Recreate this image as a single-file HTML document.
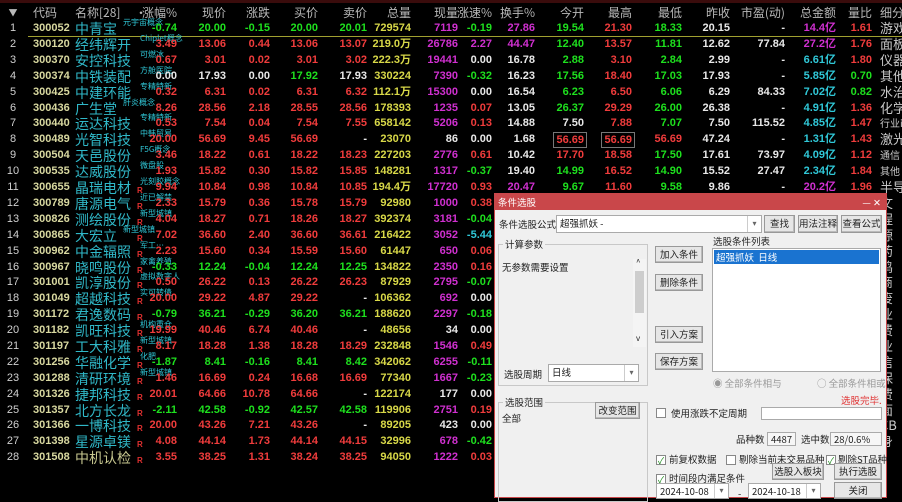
<!DOCTYPE html>
<html><head><meta charset="utf-8"><style>
*{margin:0;padding:0;box-sizing:border-box}
body{width:902px;height:498px;background:#000;overflow:hidden;position:relative;font-family:"Liberation Sans","Noto Sans CJK SC",sans-serif;font-size:11px;font-weight:bold}
.tabs{position:absolute;left:0;top:0;width:902px;height:3px;background:#3a0c0c}
.row{position:absolute;left:0;width:902px;height:16px;line-height:16px}
.row i{position:absolute;font-style:normal;white-space:nowrap}
.n0{left:4px;width:18px;text-align:center;color:#d0d0d0;font-weight:normal}
.cd{left:33px;color:#d8d8a0}
.nm{left:75px;color:#30b8c8;font-size:14px;font-weight:normal;font-family:"Noto Sans CJK SC",sans-serif;line-height:16px;top:1px}
.tg{left:122px;top:-2px;color:#30c8d8;font-size:8px;font-weight:normal;font-family:"Noto Sans CJK SC",sans-serif;line-height:10px}
.rr{left:137px;top:4px;color:#e03030;font-size:8px}
.a{right:725px}.b{right:676px}.c{right:632px}.d{right:584px}.e{right:535px}.f{right:491px}.g{right:444px}.h{right:410px}.i{right:367px}.j{right:318px}.k{right:270px}.l{right:220px}.m{right:172px}.n{right:117px}.o{right:66px}.p{right:30px}
.x{left:880px;color:#c8c8c8;font-weight:normal;font-family:"Noto Sans CJK SC",sans-serif;font-size:13px}
.R{color:#f03c3c}.G{color:#1ee01e}.W{color:#e8e8e8}.Y{color:#d8d848}.M{color:#d030d0}.C{color:#30c8d8}
.hd i{color:#b8b8b8;font-weight:normal;font-family:"Noto Sans CJK SC",sans-serif;font-size:12px}
.box{border:1px solid #777;padding:0 2px;margin-right:-3px;line-height:14px;top:1px}
.dlg{position:absolute;left:494px;top:193px;width:393px;height:305px;background:#f0f0f0;font-family:"Noto Sans CJK SC",sans-serif;font-size:9.5px;font-weight:normal;color:#222;border:1px solid #c9474a}
.dlg .t{position:absolute;left:0;top:0;width:100%;height:16px;background:#c9474a;color:#fff;padding-left:3px;line-height:16px}
.dlg div{position:absolute;white-space:nowrap}
.btn{background:#e6e6e6;border:1px solid #999;text-align:center;line-height:15px;box-shadow:inset -1px -1px #bbb}
.inp{background:#fff;border:1px solid #aaa;line-height:15px;padding-left:3px}
.grp{border:1px solid #c8c8c8}
.cb{width:10px;height:10px;border:1px solid #888;background:#fff;font-size:9px;line-height:9px;color:#1a8a1a;text-align:center}
.dd{border-left:1px solid #ccc;width:14px;height:100%;right:0;top:0;text-align:center;color:#666;font-size:8px}
</style></head><body>
<div class="tabs"></div>
<div class="row hd" style="top:5px"><i class="n0" style="font-size:9px">▼</i><i style="left:33px">代码</i><i style="left:75px">名称[28]</i><i style="left:135px">•</i><i class="a">涨幅%</i><i class="b">现价</i><i class="c">涨跌</i><i class="d">买价</i><i class="e">卖价</i><i class="f">总量</i><i class="g">现量</i><i class="h">涨速%</i><i class="i">换手%</i><i class="j">今开</i><i class="k">最高</i><i class="l">最低</i><i class="m">昨收</i><i class="n">市盈(动)</i><i class="o">总金额</i><i class="p">量比</i><i style="left:880px">细分</i></div>
<div style="position:absolute;left:28px;top:36px;width:874px;height:1px;background:#a0a030"></div>

<div class="row" style="top:20px"><i class="n0">1</i><i class="cd">300052</i><i class="nm">中青宝</i><i class="tg" style="left:123px">元宇宙概念</i><i class="a G">-0.74</i><i class="b G">20.00</i><i class="c G">-0.15</i><i class="d G">20.00</i><i class="e G">20.01</i><i class="f Y">729574</i><i class="g M">7119</i><i class="h G">-0.19</i><i class="i M">27.86</i><i class="j G">19.54</i><i class="k R">21.30</i><i class="l G">18.33</i><i class="m W">20.15</i><i class="n W">-</i><i class="o M">14.4亿</i><i class="p R">1.61</i><i class="x">游戏</i></div>
<div class="row" style="top:36px"><i class="n0">2</i><i class="cd">300120</i><i class="nm">经纬辉开</i><i class="tg" style="left:140px">Chiplet概念</i><i class="a R">3.49</i><i class="b R">13.06</i><i class="c R">0.44</i><i class="d R">13.06</i><i class="e R">13.07</i><i class="f Y">219.0万</i><i class="g M">26786</i><i class="h M">2.27</i><i class="i M">44.47</i><i class="j G">12.40</i><i class="k R">13.57</i><i class="l G">11.81</i><i class="m W">12.62</i><i class="n W">77.84</i><i class="o M">27.2亿</i><i class="p R">1.76</i><i class="x">面板</i></div>
<div class="row" style="top:52px"><i class="n0">3</i><i class="cd">300370</i><i class="nm">安控科技</i><i class="tg" style="left:140px">可燃冰</i><i class="a R">0.67</i><i class="b R">3.01</i><i class="c R">0.02</i><i class="d R">3.01</i><i class="e R">3.02</i><i class="f Y">222.3万</i><i class="g M">19441</i><i class="h W">0.00</i><i class="i W">16.78</i><i class="j G">2.88</i><i class="k R">3.10</i><i class="l G">2.84</i><i class="m W">2.99</i><i class="n W">-</i><i class="o C">6.61亿</i><i class="p R">1.80</i><i class="x">仪器</i></div>
<div class="row" style="top:68px"><i class="n0">4</i><i class="cd">300374</i><i class="nm">中铁装配</i><i class="tg" style="left:140px">方舱医院</i><i class="a W">0.00</i><i class="b W">17.93</i><i class="c W">0.00</i><i class="d G">17.92</i><i class="e W">17.93</i><i class="f Y">330224</i><i class="g M">7390</i><i class="h G">-0.32</i><i class="i W">16.23</i><i class="j G">17.56</i><i class="k R">18.40</i><i class="l G">17.03</i><i class="m W">17.93</i><i class="n W">-</i><i class="o C">5.85亿</i><i class="p G">0.70</i><i class="x">其他</i></div>
<div class="row" style="top:84px"><i class="n0">5</i><i class="cd">300425</i><i class="nm">中建环能</i><i class="tg" style="left:140px">专精特新</i><i class="a R">0.32</i><i class="b R">6.31</i><i class="c R">0.02</i><i class="d R">6.31</i><i class="e R">6.32</i><i class="f Y">112.1万</i><i class="g M">15300</i><i class="h W">0.00</i><i class="i W">16.54</i><i class="j G">6.23</i><i class="k R">6.50</i><i class="l G">6.06</i><i class="m W">6.29</i><i class="n W">84.33</i><i class="o C">7.02亿</i><i class="p G">0.82</i><i class="x">水治</i></div>
<div class="row" style="top:100px"><i class="n0">6</i><i class="cd">300436</i><i class="nm">广生堂</i><i class="tg" style="left:123px">肝炎概念</i><i class="a R">8.26</i><i class="b R">28.56</i><i class="c R">2.18</i><i class="d R">28.55</i><i class="e R">28.56</i><i class="f Y">178393</i><i class="g M">1235</i><i class="h R">0.07</i><i class="i W">13.05</i><i class="j G">26.37</i><i class="k R">29.29</i><i class="l G">26.00</i><i class="m W">26.38</i><i class="n W">-</i><i class="o C">4.91亿</i><i class="p R">1.36</i><i class="x">化学</i></div>
<div class="row" style="top:115px"><i class="n0">7</i><i class="cd">300440</i><i class="nm">运达科技</i><i class="tg" style="left:140px">专精特新</i><i class="a R">0.53</i><i class="b R">7.54</i><i class="c R">0.04</i><i class="d R">7.54</i><i class="e R">7.55</i><i class="f Y">658142</i><i class="g M">5206</i><i class="h R">0.13</i><i class="i W">14.88</i><i class="j W">7.50</i><i class="k R">7.88</i><i class="l G">7.07</i><i class="m W">7.50</i><i class="n W">115.52</i><i class="o C">4.85亿</i><i class="p R">1.47</i><i class="x" style="font-size:10px">行业i</i></div>
<div class="row" style="top:131px"><i class="n0">8</i><i class="cd">300489</i><i class="nm">光智科技</i><i class="tg" style="left:140px">中韩贸易</i><i class="a R">20.00</i><i class="b R">56.69</i><i class="c R">9.45</i><i class="d R">56.69</i><i class="e W">-</i><i class="f Y">23070</i><i class="g W">86</i><i class="h W">0.00</i><i class="i W">1.68</i><i class="j R box">56.69</i><i class="k R box">56.69</i><i class="l R">56.69</i><i class="m W">47.24</i><i class="n W">-</i><i class="o C">1.31亿</i><i class="p R">1.43</i><i class="x">激光</i></div>
<div class="row" style="top:147px"><i class="n0">9</i><i class="cd">300504</i><i class="nm">天邑股份</i><i class="tg" style="left:140px">F5G概念</i><i class="a R">3.46</i><i class="b R">18.22</i><i class="c R">0.61</i><i class="d R">18.22</i><i class="e R">18.23</i><i class="f Y">227203</i><i class="g M">2776</i><i class="h R">0.61</i><i class="i W">10.42</i><i class="j R">17.70</i><i class="k R">18.58</i><i class="l G">17.50</i><i class="m W">17.61</i><i class="n W">73.97</i><i class="o C">4.09亿</i><i class="p R">1.12</i><i class="x" style="font-size:10px">通信</i></div>
<div class="row" style="top:163px"><i class="n0">10</i><i class="cd">300535</i><i class="nm">达威股份</i><i class="tg" style="left:140px">微盘股</i><i class="a R">1.93</i><i class="b R">15.82</i><i class="c R">0.30</i><i class="d R">15.82</i><i class="e R">15.85</i><i class="f Y">148281</i><i class="g M">1317</i><i class="h G">-0.37</i><i class="i W">19.40</i><i class="j G">14.99</i><i class="k R">16.52</i><i class="l G">14.90</i><i class="m W">15.52</i><i class="n W">27.47</i><i class="o C">2.34亿</i><i class="p R">1.84</i><i class="x" style="font-size:10px">其他</i></div>
<div class="row" style="top:179px"><i class="n0">11</i><i class="cd">300655</i><i class="nm">晶瑞电材</i><i class="tg" style="left:140px">光刻胶概念</i><i class="rr">R</i><i class="a R">9.94</i><i class="b R">10.84</i><i class="c R">0.98</i><i class="d R">10.84</i><i class="e R">10.85</i><i class="f Y">194.4万</i><i class="g M">17720</i><i class="h R">0.93</i><i class="i M">20.47</i><i class="j G">9.67</i><i class="k R">11.60</i><i class="l G">9.58</i><i class="m W">9.86</i><i class="n W">-</i><i class="o M">20.2亿</i><i class="p R">1.96</i><i class="x">半导</i></div>
<div class="row" style="top:195px"><i class="n0">12</i><i class="cd">300789</i><i class="nm">唐源电气</i><i class="tg" style="left:140px">近已解禁</i><i class="rr">R</i><i class="a R">2.33</i><i class="b R">15.79</i><i class="c R">0.36</i><i class="d R">15.78</i><i class="e R">15.79</i><i class="f Y">92980</i><i class="g M">1000</i><i class="h R">0.38</i><i class="x">文</i></div>
<div class="row" style="top:211px"><i class="n0">13</i><i class="cd">300826</i><i class="nm">测绘股份</i><i class="tg" style="left:140px">新型城镇</i><i class="rr">R</i><i class="a R">4.04</i><i class="b R">18.27</i><i class="c R">0.71</i><i class="d R">18.26</i><i class="e R">18.27</i><i class="f Y">392374</i><i class="g M">3181</i><i class="h G">-0.04</i><i class="x">程</i></div>
<div class="row" style="top:227px"><i class="n0">14</i><i class="cd">300865</i><i class="nm">大宏立</i><i class="tg" style="left:123px">新型城镇</i><i class="rr">R</i><i class="a R">7.02</i><i class="b R">36.60</i><i class="c R">2.40</i><i class="d R">36.60</i><i class="e R">36.61</i><i class="f Y">216422</i><i class="g M">3052</i><i class="h C">-5.44</i><i class="x">源</i></div>
<div class="row" style="top:243px"><i class="n0">15</i><i class="cd">300962</i><i class="nm">中金辐照</i><i class="tg" style="left:140px">军工…</i><i class="rr">R</i><i class="a R">2.23</i><i class="b R">15.60</i><i class="c R">0.34</i><i class="d R">15.59</i><i class="e R">15.60</i><i class="f Y">61447</i><i class="g M">650</i><i class="h R">0.06</i><i class="x">药</i></div>
<div class="row" style="top:259px"><i class="n0">16</i><i class="cd">300967</i><i class="nm">晓鸣股份</i><i class="tg" style="left:140px">家禽养殖</i><i class="rr">R</i><i class="a G">-0.33</i><i class="b G">12.24</i><i class="c G">-0.04</i><i class="d G">12.24</i><i class="e G">12.25</i><i class="f Y">134822</i><i class="g M">2350</i><i class="h R">0.16</i><i class="x">鸡</i></div>
<div class="row" style="top:274px"><i class="n0">17</i><i class="cd">301001</i><i class="nm">凯淳股份</i><i class="tg" style="left:140px">虚拟数字人</i><i class="rr">R</i><i class="a R">0.50</i><i class="b R">26.22</i><i class="c R">0.13</i><i class="d R">26.22</i><i class="e R">26.23</i><i class="f Y">87929</i><i class="g M">2795</i><i class="h G">-0.07</i><i class="x">商</i></div>
<div class="row" style="top:290px"><i class="n0">18</i><i class="cd">301049</i><i class="nm">超越科技</i><i class="tg" style="left:140px">实可转债</i><i class="rr">R</i><i class="a R">20.00</i><i class="b R">29.22</i><i class="c R">4.87</i><i class="d R">29.22</i><i class="e W">-</i><i class="f Y">106362</i><i class="g M">692</i><i class="h W">0.00</i><i class="x">废</i></div>
<div class="row" style="top:306px"><i class="n0">19</i><i class="cd">301172</i><i class="nm">君逸数码</i><i class="rr">R</i><i class="a G">-0.79</i><i class="b G">36.21</i><i class="c G">-0.29</i><i class="d G">36.20</i><i class="e G">36.21</i><i class="f Y">188620</i><i class="g M">2297</i><i class="h G">-0.18</i><i class="x">业</i></div>
<div class="row" style="top:322px"><i class="n0">20</i><i class="cd">301182</i><i class="nm">凯旺科技</i><i class="tg" style="left:140px">机构重仓</i><i class="rr">R</i><i class="a R">19.99</i><i class="b R">40.46</i><i class="c R">6.74</i><i class="d R">40.46</i><i class="e W">-</i><i class="f Y">48656</i><i class="g W">34</i><i class="h W">0.00</i><i class="x">费</i></div>
<div class="row" style="top:338px"><i class="n0">21</i><i class="cd">301197</i><i class="nm">工大科雅</i><i class="tg" style="left:140px">新型城镇</i><i class="rr">R</i><i class="a R">8.17</i><i class="b R">18.28</i><i class="c R">1.38</i><i class="d R">18.28</i><i class="e R">18.29</i><i class="f Y">232848</i><i class="g M">1546</i><i class="h R">0.49</i><i class="x">业</i></div>
<div class="row" style="top:354px"><i class="n0">22</i><i class="cd">301256</i><i class="nm">华融化学</i><i class="tg" style="left:140px">化肥</i><i class="rr">R</i><i class="a G">-1.87</i><i class="b G">8.41</i><i class="c G">-0.16</i><i class="d G">8.41</i><i class="e G">8.42</i><i class="f Y">342062</i><i class="g M">6255</i><i class="h G">-0.11</i><i class="x">信</i></div>
<div class="row" style="top:370px"><i class="n0">23</i><i class="cd">301288</i><i class="nm">清研环境</i><i class="tg" style="left:140px">新型城镇</i><i class="rr">R</i><i class="a R">1.46</i><i class="b R">16.69</i><i class="c R">0.24</i><i class="d R">16.68</i><i class="e R">16.69</i><i class="f Y">77340</i><i class="g M">1667</i><i class="h G">-0.23</i><i class="x">保</i></div>
<div class="row" style="top:386px"><i class="n0">24</i><i class="cd">301326</i><i class="nm">捷邦科技</i><i class="rr">R</i><i class="a R">20.01</i><i class="b R">64.66</i><i class="c R">10.78</i><i class="d R">64.66</i><i class="e W">-</i><i class="f Y">122174</i><i class="g W">177</i><i class="h W">0.00</i><i class="x">费</i></div>
<div class="row" style="top:402px"><i class="n0">25</i><i class="cd">301357</i><i class="nm">北方长龙</i><i class="rr">R</i><i class="a G">-2.11</i><i class="b G">42.58</i><i class="c G">-0.92</i><i class="d G">42.57</i><i class="e G">42.58</i><i class="f Y">119906</i><i class="g M">2751</i><i class="h R">0.19</i><i class="x">面</i></div>
<div class="row" style="top:417px"><i class="n0">26</i><i class="cd">301366</i><i class="nm">一博科技</i><i class="rr">R</i><i class="a R">20.00</i><i class="b R">43.26</i><i class="c R">7.21</i><i class="d R">43.26</i><i class="e W">-</i><i class="f Y">89205</i><i class="g W">423</i><i class="h W">0.00</i><i class="x">CB</i></div>
<div class="row" style="top:433px"><i class="n0">27</i><i class="cd">301398</i><i class="nm">星源卓镁</i><i class="rr">R</i><i class="a R">4.08</i><i class="b R">44.14</i><i class="c R">1.73</i><i class="d R">44.14</i><i class="e R">44.15</i><i class="f Y">32996</i><i class="g M">678</i><i class="h G">-0.42</i><i class="x">身</i></div>
<div class="row" style="top:449px"><i class="n0">28</i><i class="cd">301508</i><i class="nm" style="color:#c8c890">中机认检</i><i class="rr">R</i><i class="a R">3.55</i><i class="b R">38.25</i><i class="c R">1.31</i><i class="d R">38.24</i><i class="e R">38.25</i><i class="f Y">94050</i><i class="g M">1222</i><i class="h R">0.03</i></div>

<div class="dlg">
<div class="t">条件选股<span style="position:absolute;right:5px;top:0">— ✕</span></div>
<div style="left:4px;top:23px">条件选股公式</div>
<div class="inp" style="left:61px;top:21px;width:206px;height:18px">超强抓妖 -<div class="dd">▾</div></div>
<div class="btn" style="left:269px;top:21px;width:31px;height:18px">查找</div>
<div class="btn" style="left:303px;top:21px;width:40px;height:18px">用法注释</div>
<div class="btn" style="left:346px;top:21px;width:41px;height:18px">查看公式</div>
<div class="grp" style="left:3px;top:50px;width:150px;height:142px"></div>
<div style="left:8px;top:43px;background:#f0f0f0;padding:0 2px">计算参数</div>
<div style="left:7px;top:66px">无参数需要设置</div>
<div style="left:138px;top:65px;width:13px;height:88px;background:#f4f4f4"><div style="left:2px;top:12px;width:9px;height:42px;background:#cdcdcd"></div><div style="left:3px;top:-2px;font-size:8px">^</div><div style="left:3px;top:74px;font-size:8px">v</div></div>
<div style="left:9px;top:173px">选股周期</div>
<div class="inp" style="left:53px;top:170px;width:91px;height:18px">日线<div class="dd">▾</div></div>
<div class="grp" style="left:3px;top:208px;width:150px;height:100px"></div>
<div style="left:8px;top:201px;background:#f0f0f0;padding:0 2px">选股范围</div>
<div style="left:7px;top:217px">全部</div>
<div class="btn" style="left:100px;top:208px;width:45px;height:17px">改变范围</div>
<div class="btn" style="left:160px;top:52px;width:48px;height:17px">加入条件</div>
<div class="btn" style="left:160px;top:80px;width:48px;height:17px">删除条件</div>
<div class="btn" style="left:160px;top:132px;width:48px;height:17px">引入方案</div>
<div class="btn" style="left:160px;top:159px;width:48px;height:17px">保存方案</div>
<div style="left:218px;top:40px">选股条件列表</div>
<div class="inp" style="left:217px;top:54px;width:169px;height:124px;padding:1px"><div style="left:1px;top:1px;width:165px;height:14px;background:#1a73d0;color:#fff;padding-left:2px;line-height:14px">超强抓妖&nbsp; 日线</div></div>
<div style="left:218px;top:182px;color:#999">◉ 全部条件相与</div>
<div style="left:322px;top:182px;color:#999">○ 全部条件相或</div>
<div style="left:346px;top:199px;color:#e03030">选股完毕.</div>
<div class="cb" style="left:161px;top:214px"></div><div style="left:176px;top:212px">使用涨跌不定周期</div>
<div class="inp" style="left:266px;top:213px;width:121px;height:13px"></div>
<div style="left:241px;top:238px">品种数</div>
<div class="inp" style="left:272px;top:238px;width:29px;height:14px;line-height:12px;background:#f6f6f6">4487</div>
<div style="left:306px;top:238px">选中数</div>
<div class="inp" style="left:335px;top:238px;width:52px;height:14px;line-height:12px;background:#f6f6f6">28/0.6%</div>
<div class="cb" style="left:161px;top:261px">✓</div><div style="left:174px;top:258px">前复权数据</div>
<div class="cb" style="left:231px;top:261px"></div><div style="left:244px;top:258px">剔除当前未交易品种</div>
<div class="cb" style="left:331px;top:261px">✓</div><div style="left:343px;top:258px">剔除ST品种</div>
<div class="cb" style="left:161px;top:280px">✓</div><div style="left:174px;top:277px">时间段内满足条件</div>
<div class="btn" style="left:277px;top:269px;width:52px;height:17px">选股入板块</div>
<div class="btn" style="left:339px;top:269px;width:48px;height:17px">执行选股</div>
<div class="inp" style="left:161px;top:289px;width:73px;height:16px;line-height:14px">2024-10-08<div class="dd">▾</div></div>
<div style="left:243px;top:292px">-</div>
<div class="inp" style="left:253px;top:289px;width:73px;height:16px;line-height:14px">2024-10-18<div class="dd">▾</div></div>
<div class="btn" style="left:339px;top:288px;width:48px;height:17px">关闭</div>
</div>
</body></html>
